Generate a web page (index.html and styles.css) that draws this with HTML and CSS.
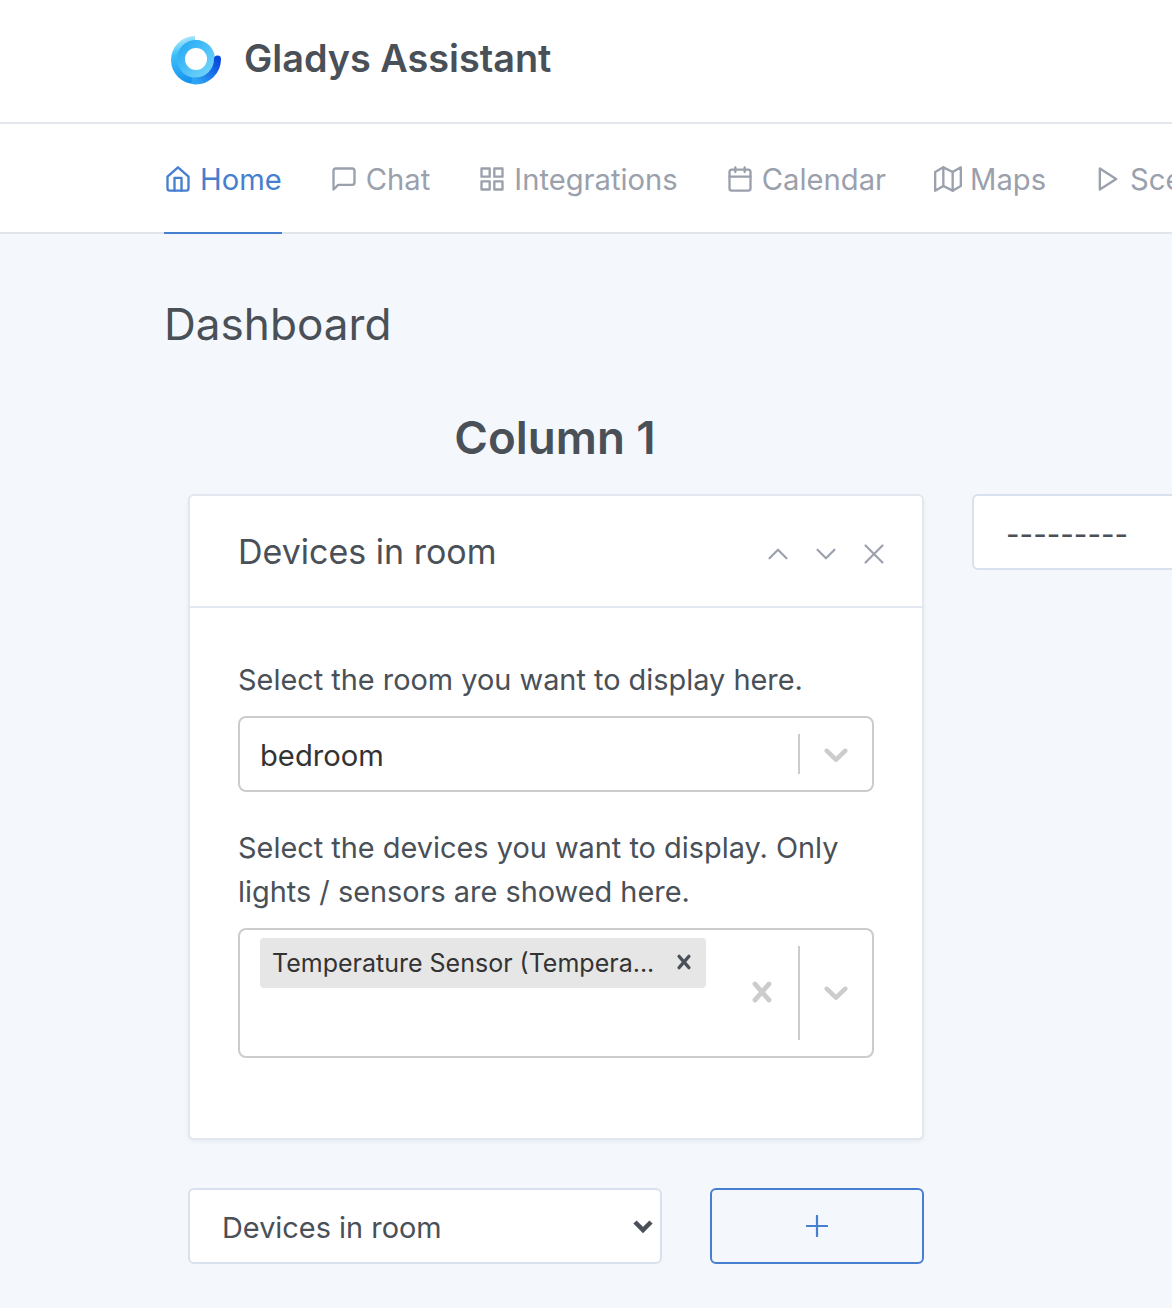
FILE: index.html
```html
<!DOCTYPE html>
<html lang="en">
    <head>
        <meta charset="utf-8" />
        <title>Gladys Assistant</title>
        <link rel="stylesheet" href="styles.css">
    </head>
    <body>
        <header class="topbar">
            <svg class="logo" width="56" height="52" viewBox="0 0 56 52">
                <defs>
                    <linearGradient id="ringOuter" x1="0.3" y1="0" x2="0.6" y2="1">
                        <stop offset="0" stop-color="#b4ecfc" />
                        <stop offset="0.3" stop-color="#3fbff8" />
                        <stop offset="1" stop-color="#0d8bee" />
                    </linearGradient>
                    <linearGradient id="ringInner" x1="0" y1="0" x2="1" y2="1">
                        <stop offset="0" stop-color="#1da6f5" />
                        <stop offset="1" stop-color="#7ddafb" />
                    </linearGradient>
                    <linearGradient id="ringDark" x1="0" y1="1" x2="1" y2="0">
                        <stop offset="0" stop-color="#2ea6f5" />
                        <stop offset="1" stop-color="#0848dc" />
                    </linearGradient>
                </defs>
                <path d="M27 2A24 24 0 1 0 51 26L46 25A19 19 0 0 0 27 6Z" fill="url(#ringOuter)" />
                <circle cx="28" cy="25" r="19" fill="url(#ringInner)" />
                <path d="M49.500 25A22 22 0 0 1 27 47" fill="none" stroke="url(#ringDark)" stroke-width="7" stroke-linecap="round" />
                <circle cx="28" cy="25" r="11" fill="#fff" />
            </svg>
            <span class="brand">Gladys Assistant</span>
        </header>
        <nav class="tabs">
            <a class="tab active">
                <svg class="icon" viewBox="0 0 24 24"><path d="M3 10 12 2l9 8v10a2 2 0 0 1-2 2H5a2 2 0 0 1-2-2z" /><path d="M9 22V11h6v11" /></svg>
                Home
            </a>
            <a class="tab">
                <svg class="icon" viewBox="0 0 24 24"><path d="M21 15a2 2 0 0 1-2 2H7l-4 4V5a2 2 0 0 1 2-2h14a2 2 0 0 1 2 2z" /></svg>
                Chat
            </a>
            <a class="tab">
                <svg class="icon" viewBox="0 0 24 24"><rect x="3" y="3" width="7" height="7" /><rect x="14" y="3" width="7" height="7" /><rect x="14" y="14" width="7" height="7" /><rect x="3" y="14" width="7" height="7" /></svg>
                Integrations
            </a>
            <a class="tab">
                <svg class="icon" viewBox="0 0 24 24"><rect x="3" y="4" width="18" height="18" rx="2" /><path d="M16 2v4M8 2v4M3 10h18" /></svg>
                Calendar
            </a>
            <a class="tab">
                <svg class="icon" viewBox="0 0 24 24"><path d="M1 6v16l7-4 8 4 7-4V2l-7 4-8-4z" /><path d="M8 2v16M16 6v16" /></svg>
                Maps
            </a>
            <a class="tab">
                <svg class="icon" viewBox="0 0 24 24"><path d="M5 3l14 9-14 9z" /></svg>
                Scene
            </a>
        </nav>
        <main class="content">
            <h1 class="pageTitle">Dashboard</h1>
            <div class="columns">
                <section class="column">
                    <h2 class="columnTitle">Column 1</h2>
                    <div class="card">
                        <div class="cardHeader">
                            <h3 class="cardTitle">Devices in room</h3>
                            <div class="cardActions">
                                <svg class="action" viewBox="0 0 24 24"><path d="M18 15l-6-6-6 6" /></svg>
                                <svg class="action" viewBox="0 0 24 24"><path d="M6 9l6 6 6-6" /></svg>
                                <svg class="action" viewBox="0 0 24 24"><path d="M18 6 6 18M6 6l12 12" /></svg>
                            </div>
                        </div>
                        <div class="cardBody">
                            <p class="label">Select the room you want to display here.</p>
                            <div class="select single">
                                <span class="selectValue">bedroom</span>
                                <span class="divider"></span>
                                <svg class="chevron" viewBox="0 0 20 20"><path d="M4.516 7.548c.436-.446 1.043-.481 1.576 0L10 11.295l3.908-3.747c.533-.481 1.141-.446 1.574 0 .436.445.408 1.197 0 1.615-.406.418-4.695 4.502-4.695 4.502a1.095 1.095 0 0 1-1.576 0S4.924 9.581 4.516 9.163c-.409-.418-.436-1.17 0-1.615z" /></svg>
                            </div>
                            <p class="label second">Select the devices you want to display. Only lights / sensors are showed here.</p>
                            <div class="select multi">
                                <div class="chips">
                                    <span class="chip">
                                        <span class="chipText">Temperature Sensor (Tempera...</span>
                                        <svg class="chipClose" viewBox="0 0 20 20"><path d="M14.348 14.849a1.2 1.2 0 0 1-1.697 0L10 11.819l-2.651 3.029a1.2 1.2 0 1 1-1.697-1.697l2.758-3.15-2.759-3.152a1.2 1.2 0 1 1 1.697-1.697L10 8.183l2.651-3.031a1.2 1.2 0 1 1 1.697 1.697l-2.758 3.152 2.758 3.15a1.2 1.2 0 0 1 0 1.698z" /></svg>
                                    </span>
                                </div>
                                <svg class="clear" viewBox="0 0 20 20"><path d="M14.348 14.849a1.2 1.2 0 0 1-1.697 0L10 11.819l-2.651 3.029a1.2 1.2 0 1 1-1.697-1.697l2.758-3.15-2.759-3.152a1.2 1.2 0 1 1 1.697-1.697L10 8.183l2.651-3.031a1.2 1.2 0 1 1 1.697 1.697l-2.758 3.152 2.758 3.15a1.2 1.2 0 0 1 0 1.698z" /></svg>
                                <span class="divider tall"></span>
                                <svg class="chevron multiChevron" viewBox="0 0 20 20"><path d="M4.516 7.548c.436-.446 1.043-.481 1.576 0L10 11.295l3.908-3.747c.533-.481 1.141-.446 1.574 0 .436.445.408 1.197 0 1.615-.406.418-4.695 4.502-4.695 4.502a1.095 1.095 0 0 1-1.576 0S4.924 9.581 4.516 9.163c-.409-.418-.436-1.17 0-1.615z" /></svg>
                            </div>
                        </div>
                    </div>
                    <div class="addRow">
                        <div class="boxSelect">
                            <span>Devices in room</span>
                            <svg class="boxChevron" viewBox="0 0 20 14"><path d="M3 3.500 10 10.500 17 3.500" /></svg>
                        </div>
                        <button class="addButton">
                            <svg class="plus" viewBox="0 0 24 24"><path d="M12 1v22M1 12h22" /></svg>
                        </button>
                    </div>
                </section>
                <section class="column">
                    <h2 class="columnTitle">Column 2</h2>
                    <div class="boxSelect wide"><span class="dashes">---------</span></div>
                </section>
            </div>
        </main>
    </body>
</html>
```

FILE: styles.css
```css
html, body{
    margin: 0;
    height: 1308px;
    overflow: hidden;
}

body{
    background-color: #f4f7fb;
    color: #495057;
    font-family: "Inter", "Liberation Sans", sans-serif;
}

.topbar{
    display: flex;
    align-items: center;
    height: 122px;
    padding-left: 168px;
    background-color: #fff;
    border-bottom: 2px solid #e3e6ec;
}

.logo{
    margin-right: 20px;
    margin-bottom: 2px;
}

.brand{
    padding-bottom: 6px;
    font-size: 37.800px;
    font-weight: 600;
    color: #495057;
}

.tabs{
    display: flex;
    gap: 48px;
    height: 108px;
    padding-left: 164px;
    background-color: #fff;
    border-bottom: 2px solid #e1e5ec;
    white-space: nowrap;
}

.tab{
    display: flex;
    align-items: center;
    gap: 8px;
    height: 110px;
    box-sizing: border-box;
    padding-top: 2px;
    border-bottom: 2px solid transparent;
    font-size: 29.200px;
    color: #9aa0ac;
}

.tab.active{
    color: #467fcf;
    border-bottom-color: #467fcf;
}

.icon{
    width: 28px;
    height: 28px;
    fill: none;
    stroke: currentColor;
    stroke-width: 2;
    stroke-linecap: round;
    stroke-linejoin: round;
}

.content{
    padding: 62px 0 0 164px;
}

.pageTitle{
    margin: 0;
    font-size: 44.100px;
    line-height: 56px;
    font-weight: 400;
}

.columns{
    display: flex;
    gap: 48px;
    margin: 57px 0 0 24px;
}

.column{
    flex: 0 0 736px;
}

.columnTitle{
    margin: 0 0 27px;
    padding-right: 2px;
    font-size: 45.700px;
    line-height: 58px;
    font-weight: 600;
    text-align: center;
}

.card{
    background-color: #fff;
    border: 2px solid #e3e7ef;
    border-radius: 6px;
    box-shadow: 0 2px 4px rgba(0, 0, 0, 0.05);
    height: 646px;
    box-sizing: border-box;
}

.cardHeader{
    display: flex;
    align-items: center;
    justify-content: space-between;
    height: 110px;
    padding: 0 31px 0 48px;
    border-bottom: 2px solid #e3e7ef;
}

.cardTitle{
    margin: 0;
    font-size: 34px;
    font-weight: 400;
}

.cardActions{
    display: flex;
    gap: 14px;
    margin-top: 6px;
}

.action{
    width: 34px;
    height: 34px;
    fill: none;
    stroke: #9aa0ac;
    stroke-width: 1.500;
    stroke-linecap: round;
    stroke-linejoin: round;
}

.cardBody{
    padding: 50px 48px 0;
}

.label{
    margin: 0 0 14px;
    font-size: 28.900px;
    line-height: 44px;
}

.label.second{
    margin-top: 34px;
    margin-bottom: 14px;
}

.select{
    display: flex;
    align-items: center;
    box-sizing: border-box;
    background-color: #fff;
    border: 2px solid #ccc;
    border-radius: 8px;
}

.select.single{
    height: 76px;
    padding-left: 20px;
}

.select.multi{
    height: 130px;
    padding-left: 20px;
}

.selectValue{
    flex: 1;
    padding-top: 2px;
    font-size: 29.200px;
    color: #333;
}

.divider{
    width: 2px;
    height: 40px;
    background-color: #ccc;
}

.divider.tall{
    height: 94px;
}

.chevron{
    width: 40px;
    height: 40px;
    margin: 0 16px;
    fill: #ccc;
}

.multiChevron{
    margin-top: -2px;
}

.chips{
    flex: 1;
    align-self: flex-start;
    padding-top: 8px;
}

.chip{
    display: inline-flex;
    align-items: center;
    justify-content: space-between;
    box-sizing: border-box;
    width: 446px;
    height: 50px;
    padding: 0 8px 0 12px;
    background-color: #e6e6e6;
    border-radius: 4px;
    font-size: 25px;
    color: #333;
    white-space: nowrap;
}

.chipClose{
    width: 28px;
    height: 28px;
    margin-bottom: 2px;
    fill: #495057;
}

.clear{
    width: 40px;
    height: 40px;
    margin-right: 16px;
    margin-top: -2px;
    fill: #ccc;
}

.addRow{
    display: flex;
    gap: 48px;
    margin-top: 48px;
}

.boxSelect{
    display: flex;
    align-items: center;
    justify-content: space-between;
    flex: 0 0 474px;
    height: 76px;
    box-sizing: border-box;
    padding: 3px 5px 0 32px;
    background-color: #fff;
    border: 2px solid #d9e1ee;
    border-radius: 6px;
    font-size: 28.900px;
}

.boxSelect.wide{
    width: 736px;
    margin-top: 0;
}

.dashes{
    font-size: 29.500px;
    color: #495057;
}

.boxChevron{
    width: 24px;
    height: 16px;
    margin-top: -4px;
    fill: none;
    stroke: #495057;
    stroke-width: 4;
}

.addButton{
    flex: 0 0 214px;
    height: 76px;
    padding: 0;
    background-color: transparent;
    border: 2px solid #467fcf;
    border-radius: 6px;
}

.plus{
    display: block;
    width: 22px;
    height: 22px;
    margin: 0 auto;
    fill: none;
    stroke: #467fcf;
    stroke-width: 2.400;
    stroke-linecap: round;
}
```
